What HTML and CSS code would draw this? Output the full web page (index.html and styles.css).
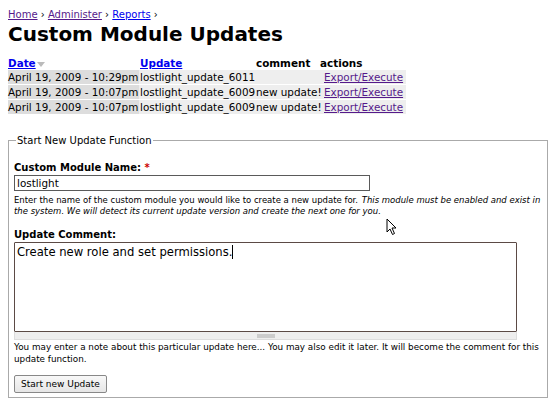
FILE: index.html
```html
<!DOCTYPE html>
<html>
<head>
<meta charset="utf-8">
<link rel="stylesheet" href="styles.css">
</head>
<body>
<div class="breadcrumb"><a href="#" class="visited">Home</a> › <a href="#" class="visited">Administer</a> › <a href="#">Reports</a> ›</div>
<h1 class="title">Custom Module Updates</h1>
<table class="updates">
  <colgroup>
    <col class="c1"><col class="c2"><col class="c3"><col class="c4">
  </colgroup>
  <thead>
    <tr>
      <th><a href="#">Date</a><span class="sort-arrow"></span></th>
      <th><a href="#">Update</a></th>
      <th>comment</th>
      <th>actions</th>
    </tr>
  </thead>
  <tbody>
    <tr>
      <td class="active">April 19, 2009 - 10:29pm</td>
      <td>lostlight_update_6011</td>
      <td></td>
      <td><a href="#" class="visited act">Export/Execute</a></td>
    </tr>
    <tr>
      <td class="active">April 19, 2009 - 10:07pm</td>
      <td>lostlight_update_6009</td>
      <td>new update!</td>
      <td><a href="#" class="visited act">Export/Execute</a></td>
    </tr>
    <tr>
      <td class="active">April 19, 2009 - 10:07pm</td>
      <td>lostlight_update_6009</td>
      <td>new update!</td>
      <td><a href="#" class="visited act">Export/Execute</a></td>
    </tr>
  </tbody>
</table>

<fieldset class="box">
  <legend>Start New Update Function</legend>
  <label class="lbl">Custom Module Name: <span class="req">*</span></label>
  <input class="text-input" type="text" value="lostlight">
  <div class="desc">Enter the name of the custom module you would like to create a new update for. <em class="emph">This module must be enabled and exist in the system. We will detect its current update version and create the next one for you.</em></div>
  <label class="lbl lbl-2">Update Comment:</label>
  <div class="textarea-wrap">
    <div class="textarea">Create new role and set permissions.<span class="caret"></span></div>
    <div class="grippie"><span class="grip"></span></div>
  </div>
  <div class="note">You may enter a note about this particular update here... You may also edit it later. It will become the comment for this update function.</div>
  <button class="btn" type="button">Start new Update</button>
</fieldset>

<svg class="cursor" width="12" height="18" viewBox="0 0 12 18"><path d="M1 1 L1 14 L4 11 L6.5 16.5 L8.5 15.5 L6 10 L10 10 Z" fill="#fff" stroke="#000" stroke-width="1" stroke-linejoin="round"/></svg>
</body>
</html>
```
FILE: styles.css
```css
html, body {
  margin: 0;
  background: #fff;
}
body {
  padding: 8px;
  font-family: "DejaVu Sans", Verdana, sans-serif;
  font-size: 10.4px;
  color: #000;
  position: relative;
}
a {
  color: #0000ee;
  text-decoration: underline;
}
a.visited {
  color: #551a8b;
}
.breadcrumb {
  font-size: 10px;
  line-height: 14px;
}
.title {
  font-size: 20px;
  line-height: 24px;
  margin: 0 0 10px 0;
  font-weight: bold;
}
.updates {
  border-collapse: collapse;
  table-layout: fixed;
  width: 398px;
  font-size: 10.4px;
}
.c1 { width: 131px; }
.c2 { width: 116px; }
.c3 { width: 64px; }
.c4 { width: 87px; }
.updates th {
  text-align: left;
  padding: 0 0 0 1px;
  line-height: 14px;
  font-weight: bold;
  white-space: nowrap;
}
.updates th:first-child {
  padding-left: 0;
}
.sort-arrow {
  display: inline-block;
  width: 0;
  height: 0;
  border-left: 4px solid transparent;
  border-right: 4px solid transparent;
  border-top: 5px solid #bbb;
  margin-left: 1px;
  vertical-align: middle;
}
.updates td {
  padding: 0 0 0 1px;
  line-height: 14px;
  background: #eee;
  border-bottom: 1px solid #fff;
  white-space: nowrap;
  overflow: visible;
}
.updates td.active {
  background: #ddd;
  padding-left: 0;
}
.act {
  margin-left: 4px;
}
.box {
  margin: 19px 0 0 0;
  padding: 14px 5px 4px 5px;
  border: 1px solid #aaa;
  width: 528px;
}
.box legend {
  padding: 0 1px;
  margin-left: 2px;
  font-size: 10px;
  line-height: 13px;
}
.lbl {
  display: block;
  font-weight: bold;
  font-size: 10px;
  line-height: 14px;
}
.lbl-2 {
  margin-top: 11px;
}
.req {
  color: #cc0000;
}
.text-input {
  display: block;
  box-sizing: border-box;
  width: 356px;
  height: 16px;
  margin: 0;
  padding: 0 2px;
  border: 1px solid #5a5a5a;
  font-family: "DejaVu Sans", Verdana, sans-serif;
  font-size: 10.4px;
  color: #000;
}
.desc {
  font-size: 8.5px;
  line-height: 11px;
  margin-top: 4px;
}
.emph {
  margin-left: 1px;
}
.textarea-wrap {
  width: 503px;
}
.textarea {
  box-sizing: border-box;
  height: 90px;
  border: 1px solid #5b4a45;
  border-radius: 1px;
  padding: 2px 2px;
  font-size: 11.6px;
  line-height: 15px;
}
.caret {
  display: inline-block;
  width: 1px;
  height: 14px;
  background: #000;
  vertical-align: top;
}
.grippie {
  box-sizing: border-box;
  height: 8px;
  background: #eee;
  border: 1px solid #ddd;
  border-top: none;
  display: flex;
  justify-content: center;
  align-items: center;
}
.grip {
  width: 18px;
  height: 4px;
  background: #ccc;
}
.note {
  font-size: 8.8px;
  line-height: 12px;
  margin-top: 1px;
}
.btn {
  display: block;
  font-family: "DejaVu Sans", Verdana, sans-serif;
  font-size: 9px;
  line-height: 12px;
  padding: 2px 6px;
  height: 18px;
  background: linear-gradient(#f8f8f8, #e6e6e6);
  border: 1px solid #888;
  border-radius: 2px;
  color: #000;
  margin-top: 10px;
}
.cursor {
  position: absolute;
  left: 386px;
  top: 218px;
}
```
